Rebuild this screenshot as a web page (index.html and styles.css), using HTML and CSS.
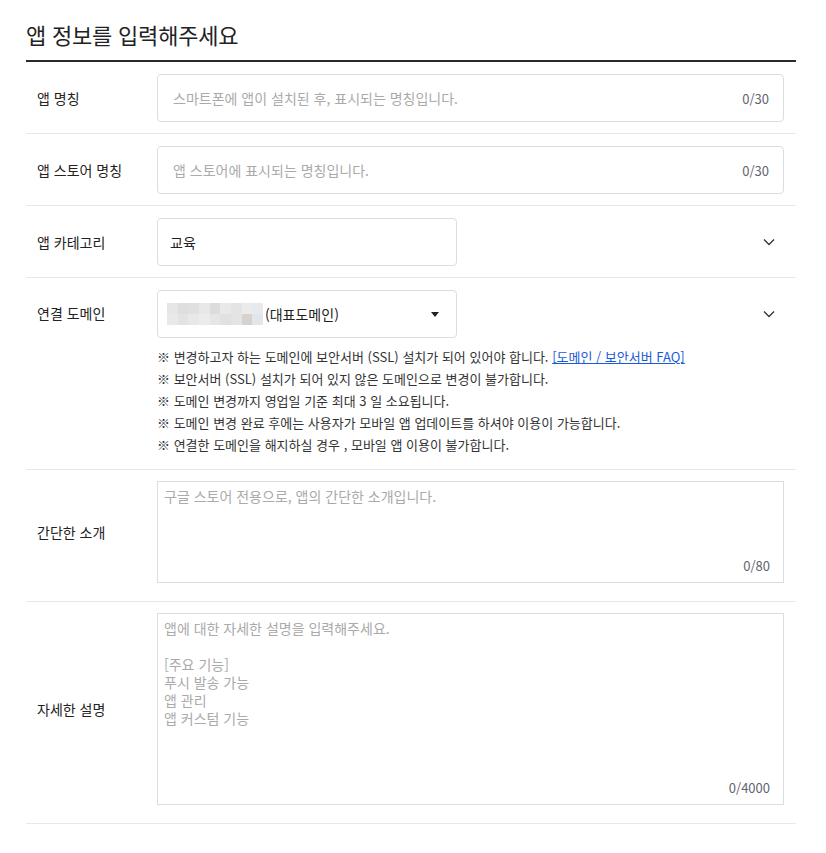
FILE: index.html
```html
<!DOCTYPE html>
<html lang="ko">
<head>
<meta charset="utf-8">
<title>앱 정보 입력</title>
<link rel="stylesheet" href="styles.css">
</head>
<body>
<div class="app_form">
	<h2 class="form_title">앱 정보를 입력해주세요</h2>

	<div class="form_row">
		<div class="row_label">앱 명칭</div>
		<div class="row_field">
			<div class="text_box">
				<input type="text" placeholder="스마트폰에 앱이 설치된 후, 표시되는 명칭입니다.">
				<span class="counter">0/30</span>
			</div>
		</div>
	</div>

	<div class="form_row">
		<div class="row_label">앱 스토어 명칭</div>
		<div class="row_field">
			<div class="text_box">
				<input type="text" placeholder="앱 스토어에 표시되는 명칭입니다.">
				<span class="counter">0/30</span>
			</div>
		</div>
	</div>

	<div class="form_row">
		<div class="row_label">앱 카테고리</div>
		<div class="row_field with_arrow">
			<div class="select_box">교육</div>
			<svg class="row_arrow" width="12" height="8" viewBox="0 0 12 8"><path d="M1 1.5 L6 6.5 L11 1.5" fill="none" stroke="#333" stroke-width="1.3"/></svg>
		</div>
	</div>

	<div class="form_row top_row">
		<div class="row_label">연결 도메인</div>
		<div class="row_field">
			<div class="with_arrow">
				<div class="select_box">
					<span class="blur_domain">
						<i style="background:#e6e6e6"></i><i style="background:#dedede"></i><i style="background:#e0e0e0"></i><i style="background:#e8e8e8"></i><i style="background:#dcdcdc"></i><i style="background:#e9e9e9"></i><i style="background:#e4e4e4"></i><i style="background:#ebebeb"></i><i style="background:#e7e9ec"></i>
						<i style="background:#e9e9e9"></i><i style="background:#e3e3e3"></i><i style="background:#e8e8e8"></i><i style="background:#ececec"></i><i style="background:#e6e6e6"></i><i style="background:#e1e1e1"></i><i style="background:#e4e4e4"></i><i style="background:#d8d2cf"></i><i style="background:#e2e5e9"></i>
					</span>
					<span>(대표도메인)</span>
					<span class="caret"></span>
				</div>
				<svg class="row_arrow" width="12" height="8" viewBox="0 0 12 8"><path d="M1 1.5 L6 6.5 L11 1.5" fill="none" stroke="#333" stroke-width="1.3"/></svg>
			</div>
			<ul class="notes">
				<li>※ 변경하고자 하는 도메인에 보안서버 (SSL) 설치가 되어 있어야 합니다. <a href="#">[도메인 / 보안서버 FAQ]</a></li>
				<li>※ 보안서버 (SSL) 설치가 되어 있지 않은 도메인으로 변경이 불가합니다.</li>
				<li>※ 도메인 변경까지 영업일 기준 최대 3 일 소요됩니다.</li>
				<li>※ 도메인 변경 완료 후에는 사용자가 모바일 앱 업데이트를 하셔야 이용이 가능합니다.</li>
				<li>※ 연결한 도메인을 해지하실 경우 , 모바일 앱 이용이 불가합니다.</li>
			</ul>
		</div>
	</div>

	<div class="form_row area_row">
		<div class="row_label">간단한 소개</div>
		<div class="row_field">
			<div class="area_box short">
				<textarea placeholder="구글 스토어 전용으로, 앱의 간단한 소개입니다."></textarea>
				<span class="counter">0/80</span>
			</div>
		</div>
	</div>

	<div class="form_row area_row">
		<div class="row_label">자세한 설명</div>
		<div class="row_field">
			<div class="area_box long">
				<textarea placeholder="앱에 대한 자세한 설명을 입력해주세요.&#10;&#10;[주요 기능]&#10;푸시 발송 가능&#10;앱 관리&#10;앱 커스텀 기능"></textarea>
				<span class="counter">0/4000</span>
			</div>
		</div>
	</div>
</div>
</body>
</html>
```

FILE: styles.css
```css
body {
	margin: 0;
	background: #fff;
	color: #222;
	font-family: "Noto Sans CJK KR", "Noto Sans", sans-serif;
	font-size: 14px;
}
.app_form {
	width: 770px;
	margin-left: 26px;
}
.form_title {
	margin: 0;
	padding: 18px 0 10px;
	font-size: 22px;
	line-height: 32px;
	font-weight: 400;
	letter-spacing: -0.2px;
	color: #222;
	border-bottom: 2px solid #2a2a2a;
}
.form_row {
	display: flex;
	align-items: center;
	padding: 12px 0 11px;
	border-bottom: 1px solid #e8e8e8;
}
.area_row {
	padding: 11px 0 18px;
}
.top_row {
	align-items: flex-start;
	padding-bottom: 13px;
}
.row_label {
	width: 120px;
	padding-left: 11px;
	line-height: 47px;
	color: #222;
}
.row_field {
	flex: 1;
	padding-right: 12px;
}
.with_arrow {
	display: flex;
	align-items: center;
	justify-content: space-between;
}
.row_arrow {
	display: block;
	margin-right: 9px;
}
.text_box {
	display: flex;
	align-items: center;
	height: 46px;
	border: 1px solid #ddd;
	border-radius: 4px;
	padding: 0 14px 0 15px;
}
.text_box input {
	flex: 1;
	border: 0;
	outline: 0;
	padding: 0;
	font: inherit;
	color: #222;
	background: transparent;
}
input::placeholder, textarea::placeholder {
	color: #aaa;
	opacity: 1;
}
.counter {
	font-size: 13px;
	color: #5f6470;
}
.select_box {
	display: flex;
	align-items: center;
	box-sizing: border-box;
	width: 300px;
	height: 48px;
	border: 1px solid #ddd;
	border-radius: 4px;
	padding: 0 12px;
	color: #222;
}
.blur_domain {
	display: flex;
	flex-wrap: wrap;
	width: 96px;
	height: 22px;
	margin: 0 2px 0 -3px;
}
.blur_domain i {
	display: block;
	width: 10.66px;
	height: 11px;
}
.caret {
	margin-left: auto;
	margin-right: 5px;
	width: 0;
	height: 0;
	border-left: 4.5px solid transparent;
	border-right: 4.5px solid transparent;
	border-top: 5px solid #222;
}
.notes {
	list-style: none;
	margin: 8px 0 0;
	padding: 0;
	font-size: 13px;
	line-height: 22px;
	color: #333;
}
.notes a {
	color: #1a5bd8;
	text-decoration: underline;
}
.area_box {
	position: relative;
	border: 1px solid #ddd;
}
.area_box textarea {
	display: block;
	box-sizing: border-box;
	width: 100%;
	border: 0;
	outline: 0;
	resize: none;
	padding: 5px 6px;
	font: inherit;
	line-height: 18px;
	color: #222;
}
.area_box.short textarea {
	height: 100px;
}
.area_box.long textarea {
	height: 190px;
}
.area_box .counter {
	position: absolute;
	right: 13px;
	bottom: 7px;
}
```
